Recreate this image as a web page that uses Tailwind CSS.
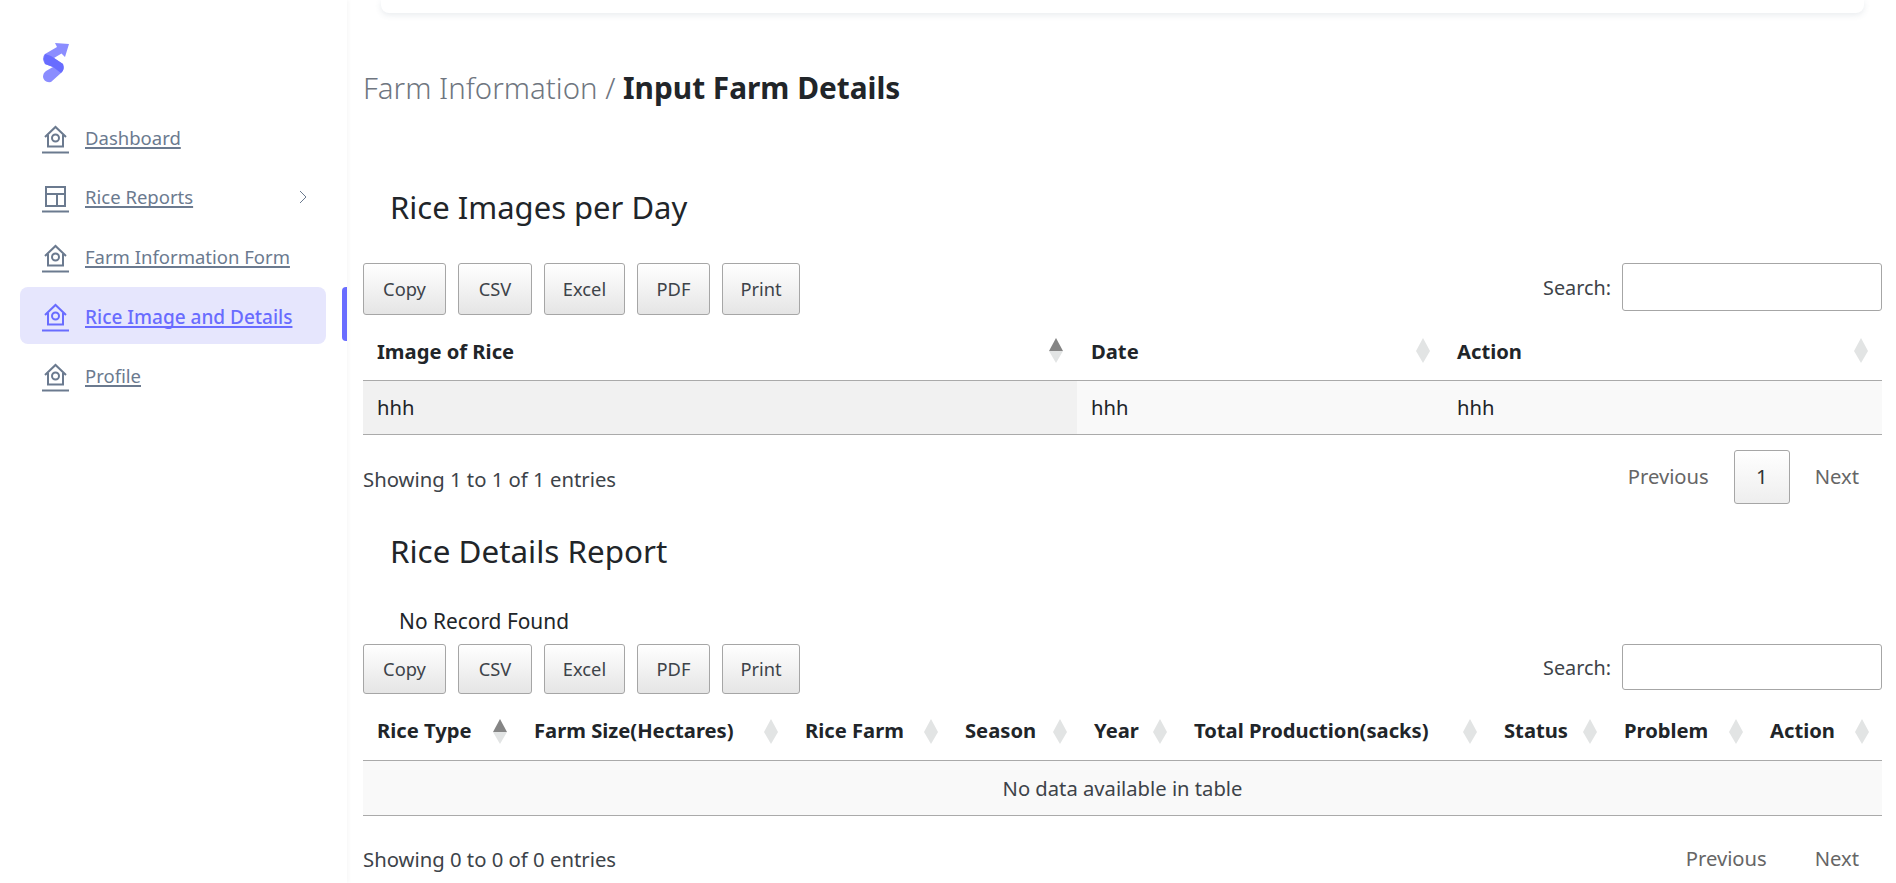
<!DOCTYPE html>
<html lang="en">
<head>
  <meta charset="UTF-8" />
  <title>Input Farm Details</title>
  <script src="https://cdn.jsdelivr.net/npm/@tailwindcss/browser@4"></script>
</head>
<body class="h-[883px] overflow-hidden flex bg-white font-['Noto_Sans',sans-serif] text-[#212529]">
  <!-- Sidebar -->
  <aside class="w-[347px] shrink-0 h-full bg-white relative shadow-[2px_0_4px_rgba(0,0,0,0.03)]">
    <div class="pl-[41px] pt-[42px] h-[109px]">
      <svg width="30" height="42" viewBox="0 0 30 42">
        <path d="M14 1 L28 2 L24 15 L20.5 11.5 L13 16 L22 22 Q24 28 20 31 L10 40 Q3 41 2 35 Q2 31 5 29 L12 25 L4 22 Q0 16 4 12 L16 5 Z" fill="#8b8dff"/>
        <path d="M4 12 Q2 16 4 22 L12 25 L20 31 Q24 28 22 22 L10 14 Z" fill="#686cff"/>
      </svg>
    </div>
    <nav class="text-[18.5px] text-[#6b7a8f]">
      <a href="#" class="flex items-center h-[57px] mx-[20px] pl-[22px] mb-[2.5px] rounded-lg">
        <svg class="w-[27px] h-[30px] mr-[16px] mt-[2px]" viewBox="0 0 27 30" fill="none" stroke="currentColor" stroke-width="2"><path d="M3 13 L13.5 3 L24 13"/><path d="M6 11 V22.5 H21 V11"/><circle cx="13.5" cy="14" r="3.5"/><path d="M0 28.5 H27"/></svg>
        <span class="underline underline-offset-2 decoration-2 [text-decoration-skip-ink:none]">Dashboard</span>
      </a>
      <a href="#" class="flex items-center h-[57px] mx-[20px] pl-[22px] mb-[2.5px] rounded-lg">
        <svg class="w-[27px] h-[30px] mr-[16px] mt-[2px]" viewBox="0 0 27 30" fill="none" stroke="currentColor" stroke-width="2"><rect x="4" y="4" width="19" height="19"/><path d="M4 11 H23 M15 11 V23"/><path d="M0 28.5 H27"/></svg>
        <span class="underline underline-offset-2 decoration-2 [text-decoration-skip-ink:none]">Rice Reports</span>
        <svg class="w-[8px] h-[14px] ml-auto mr-[20px]" viewBox="0 0 8 14" fill="none" stroke="currentColor" stroke-width="1"><path d="M1 1 L7 7 L1 13"/></svg>
      </a>
      <a href="#" class="flex items-center h-[57px] mx-[20px] pl-[22px] mb-[1.5px] rounded-lg">
        <svg class="w-[27px] h-[30px] mr-[16px] mt-[2px]" viewBox="0 0 27 30" fill="none" stroke="currentColor" stroke-width="2"><path d="M3 13 L13.5 3 L24 13"/><path d="M6 11 V22.5 H21 V11"/><circle cx="13.5" cy="14" r="3.5"/><path d="M0 28.5 H27"/></svg>
        <span class="underline underline-offset-2 decoration-2 [text-decoration-skip-ink:none]">Farm Information Form</span>
      </a>
      <a href="#" class="flex items-center h-[57px] mx-[20px] pl-[22px] mb-[3.5px] w-[306px] rounded-lg bg-[#e6e6fd] text-[#696cff] text-[19px] font-medium">
        <svg class="w-[27px] h-[30px] mr-[16px] mt-[4px]" viewBox="0 0 27 30" fill="none" stroke="currentColor" stroke-width="2"><path d="M3 13 L13.5 3 L24 13"/><path d="M6 11 V22.5 H21 V11"/><circle cx="13.5" cy="14" r="3.5"/><path d="M0 28.5 H27"/></svg>
        <span class="mt-[5px] underline underline-offset-2 decoration-2 [text-decoration-skip-ink:none]">Rice Image and Details</span>
      </a>
      <a href="#" class="flex items-center h-[57px] mx-[20px] pl-[22px] rounded-lg">
        <svg class="w-[27px] h-[30px] mr-[16px] mt-[2px]" viewBox="0 0 27 30" fill="none" stroke="currentColor" stroke-width="2"><path d="M3 13 L13.5 3 L24 13"/><path d="M6 11 V22.5 H21 V11"/><circle cx="13.5" cy="14" r="3.5"/><path d="M0 28.5 H27"/></svg>
        <span class="underline underline-offset-2 decoration-2 [text-decoration-skip-ink:none]">Profile</span>
      </a>
    </nav>
    <div class="absolute right-0 top-[287px] w-[5px] h-[54px] rounded-l bg-[#696cff]"></div>
  </aside>

  <!-- Main -->
  <main class="flex-1 min-w-0 pl-[16px] pr-[14px]">
    <div class="h-[13px] ml-[18px] mr-[18px] bg-white rounded-b-lg shadow-[0_2px_6px_rgba(67,89,113,0.12)]"></div>

    <h4 class="mt-[53px] h-[44px] text-[29.4px] leading-[44px] font-light text-[#6f7680]">Farm Information / <span class="font-bold text-[29.8px] text-[#212529]">Input Farm Details</span></h4>

    <h3 class="mt-[77px] ml-[27px] h-[44px] text-[31px] leading-[40px]">Rice Images per Day</h3>

    <!-- first table -->
    <div class="mt-[32px] flex justify-between items-start h-[52px]">
      <div class="flex gap-[12px] text-[18.3px] text-[#3d4349]">
        <button class="w-[83px] h-[52px] border border-[#a6a6a6] rounded-[3px] bg-linear-to-b from-white to-[#e5e5e5]">Copy</button>
        <button class="w-[74px] h-[52px] border border-[#a6a6a6] rounded-[3px] bg-linear-to-b from-white to-[#e5e5e5]">CSV</button>
        <button class="w-[81px] h-[52px] border border-[#a6a6a6] rounded-[3px] bg-linear-to-b from-white to-[#e5e5e5]">Excel</button>
        <button class="w-[73px] h-[52px] border border-[#a6a6a6] rounded-[3px] bg-linear-to-b from-white to-[#e5e5e5]">PDF</button>
        <button class="w-[78px] h-[52px] border border-[#a6a6a6] rounded-[3px] bg-linear-to-b from-white to-[#e5e5e5]">Print</button>
      </div>
      <label class="flex items-center gap-[11px] text-[19.8px] text-[#3d4349]"><span class="mt-[2px]">Search:</span>
        <input type="text" class="w-[260px] h-[48px] border border-[#a6a6a6] rounded-[3px] bg-white" />
      </label>
    </div>

    <table class="mt-[13px] w-full table-fixed border-collapse text-[20.2px]">
      <colgroup><col class="w-[714px]" /><col class="w-[366px]" /><col /></colgroup>
      <thead>
        <tr class="h-[52px] border-b border-[#aaaaaa] font-bold text-left">
          <th class="px-[14px] pb-[6px] relative">Image of Rice
            <svg class="absolute right-[14px] top-[10px]" width="14" height="26" viewBox="0 0 14 26"><path d="M7 0 L14 13 H0 Z" fill="#858585"/><path d="M7 25 L14 13 H0 Z" fill="#e2e4e4"/></svg>
          </th>
          <th class="px-[14px] pb-[6px] relative">Date
            <svg class="absolute right-[13px] top-[10px]" width="14" height="26" viewBox="0 0 14 26"><path d="M7 0 L14 13 L7 25 L0 13 Z" fill="#e2e4e4"/></svg>
          </th>
          <th class="px-[14px] pb-[6px] relative">Action
            <svg class="absolute right-[14px] top-[10px]" width="14" height="26" viewBox="0 0 14 26"><path d="M7 0 L14 13 L7 25 L0 13 Z" fill="#e2e4e4"/></svg>
          </th>
        </tr>
      </thead>
      <tbody>
        <tr class="h-[54px] border-b border-[#aaaaaa] bg-[#f9f9f9]">
          <td class="px-[14px] bg-[#f1f1f1]">hhh</td>
          <td class="px-[14px]">hhh</td>
          <td class="px-[14px]">hhh</td>
        </tr>
      </tbody>
    </table>

    <div class="h-[96px] flex justify-between items-start text-[20.3px] text-[#3d4349]">
      <div class="mt-[29px]">Showing 1 to 1 of 1 entries</div>
      <div class="mt-[15px] flex items-center text-[20.2px] text-[#666] pr-[23px]">
        <span class="mr-[25px]">Previous</span>
        <span class="w-[56px] h-[54px] flex items-center justify-center border border-[#a6a6a6] rounded-[3px] bg-linear-to-b from-white to-[#eeeeee] text-[#333] mr-[25px]">1</span>
        <span>Next</span>
      </div>
    </div>

    <h3 class="ml-[27px] h-[44px] text-[31.4px] leading-[40px]">Rice Details Report</h3>
    <p class="mt-[33px] ml-[36px] h-[26px] text-[20.9px] leading-[26px]">No Record Found</p>

    <!-- second table -->
    <div class="mt-[10px] flex justify-between items-start h-[50px]">
      <div class="flex gap-[12px] text-[18.3px] text-[#3d4349]">
        <button class="w-[83px] h-[50px] border border-[#a6a6a6] rounded-[3px] bg-linear-to-b from-white to-[#e5e5e5]">Copy</button>
        <button class="w-[74px] h-[50px] border border-[#a6a6a6] rounded-[3px] bg-linear-to-b from-white to-[#e5e5e5]">CSV</button>
        <button class="w-[81px] h-[50px] border border-[#a6a6a6] rounded-[3px] bg-linear-to-b from-white to-[#e5e5e5]">Excel</button>
        <button class="w-[73px] h-[50px] border border-[#a6a6a6] rounded-[3px] bg-linear-to-b from-white to-[#e5e5e5]">PDF</button>
        <button class="w-[78px] h-[50px] border border-[#a6a6a6] rounded-[3px] bg-linear-to-b from-white to-[#e5e5e5]">Print</button>
      </div>
      <label class="flex items-center gap-[11px] text-[19.8px] text-[#3d4349] h-[46px]"><span class="mt-[2px]">Search:</span>
        <input type="text" class="w-[260px] h-[46px] border border-[#a6a6a6] rounded-[3px] bg-white" />
      </label>
    </div>

    <table class="mt-[15px] w-full table-fixed border-collapse text-[20.2px]">
      <colgroup>
        <col class="w-[157px]" /><col class="w-[271px]" /><col class="w-[160px]" /><col class="w-[129px]" /><col class="w-[100px]" /><col class="w-[310px]" /><col class="w-[120px]" /><col class="w-[146px]" /><col />
      </colgroup>
      <thead>
        <tr class="h-[52px] border-b border-[#aaaaaa] font-bold text-left whitespace-nowrap">
          <th class="px-[14px] pb-[8px] relative">Rice Type<svg class="absolute right-[13px] top-[10px]" width="14" height="26" viewBox="0 0 14 26"><path d="M7 0 L14 13 H0 Z" fill="#858585"/><path d="M7 25 L14 13 H0 Z" fill="#e2e4e4"/></svg></th>
          <th class="px-[14px] pb-[8px] relative">Farm Size(Hectares)<svg class="absolute right-[13px] top-[10px]" width="14" height="26" viewBox="0 0 14 26"><path d="M7 0 L14 13 L7 25 L0 13 Z" fill="#e2e4e4"/></svg></th>
          <th class="px-[14px] pb-[8px] relative">Rice Farm<svg class="absolute right-[13px] top-[10px]" width="14" height="26" viewBox="0 0 14 26"><path d="M7 0 L14 13 L7 25 L0 13 Z" fill="#e2e4e4"/></svg></th>
          <th class="px-[14px] pb-[8px] relative">Season<svg class="absolute right-[13px] top-[10px]" width="14" height="26" viewBox="0 0 14 26"><path d="M7 0 L14 13 L7 25 L0 13 Z" fill="#e2e4e4"/></svg></th>
          <th class="px-[14px] pb-[8px] relative">Year<svg class="absolute right-[13px] top-[10px]" width="14" height="26" viewBox="0 0 14 26"><path d="M7 0 L14 13 L7 25 L0 13 Z" fill="#e2e4e4"/></svg></th>
          <th class="px-[14px] pb-[8px] relative">Total Production(sacks)<svg class="absolute right-[13px] top-[10px]" width="14" height="26" viewBox="0 0 14 26"><path d="M7 0 L14 13 L7 25 L0 13 Z" fill="#e2e4e4"/></svg></th>
          <th class="px-[14px] pb-[8px] relative">Status<svg class="absolute right-[13px] top-[10px]" width="14" height="26" viewBox="0 0 14 26"><path d="M7 0 L14 13 L7 25 L0 13 Z" fill="#e2e4e4"/></svg></th>
          <th class="px-[14px] pb-[8px] relative">Problem<svg class="absolute right-[13px] top-[10px]" width="14" height="26" viewBox="0 0 14 26"><path d="M7 0 L14 13 L7 25 L0 13 Z" fill="#e2e4e4"/></svg></th>
          <th class="px-[14px] pb-[8px] relative">Action<svg class="absolute right-[13px] top-[10px]" width="14" height="26" viewBox="0 0 14 26"><path d="M7 0 L14 13 L7 25 L0 13 Z" fill="#e2e4e4"/></svg></th>
        </tr>
      </thead>
      <tbody>
        <tr class="h-[55px] border-b border-[#aaaaaa] bg-[#f9f9f9]">
          <td colspan="9" class="text-center text-[#3d4349]">No data available in table</td>
        </tr>
      </tbody>
    </table>

    <div class="flex justify-between items-start text-[20.3px] text-[#3d4349]">
      <div class="mt-[28px]">Showing 0 to 0 of 0 entries</div>
      <div class="mt-[27px] flex items-center text-[20.2px] text-[#666] pr-[23px]">
        <span class="mr-[48px]">Previous</span>
        <span>Next</span>
      </div>
    </div>
  </main>
</body>
</html>
